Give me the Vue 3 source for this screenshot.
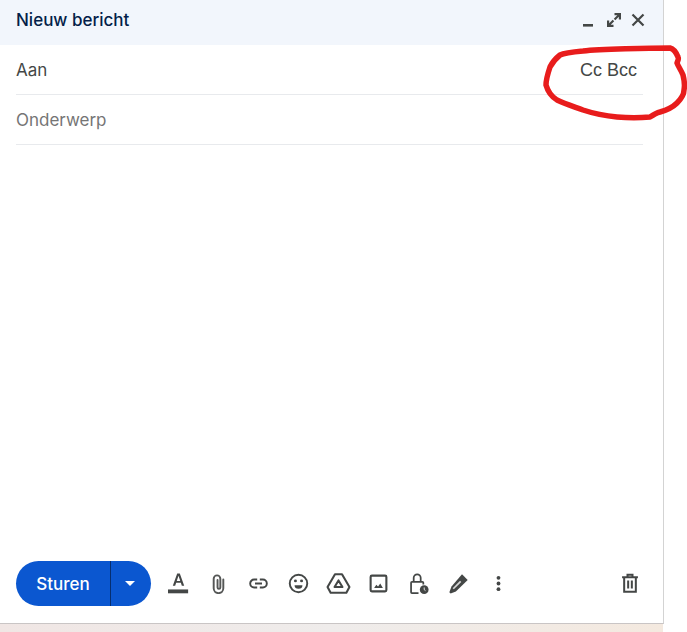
<template>
  <div class="pagina">
    <div class="venster">
      <header class="kop">
        <span class="titel">Nieuw bericht</span>
        <div class="kop-iconen">
          <svg width="16" height="16" viewBox="0 0 16 16"><rect x="1" y="12" width="10" height="2.6" fill="#444746" /></svg>
          <svg width="16" height="16" viewBox="0 0 16 16" fill="#444746">
            <path d="M8.500 1h6.500v6.500h-2.200V4.700L9.300 8.200 7.800 6.700l3.500-3.500H8.500z" />
            <path d="M7.500 15H1V8.500h2.200v2.800l3.500-3.500 1.500 1.500-3.500 3.500h2.800z" />
          </svg>
          <svg width="16" height="16" viewBox="0 0 16 16" fill="none" stroke="#444746" stroke-width="2.200">
            <path d="M2.500 2.500l11 11M13.500 2.500l-11 11" />
          </svg>
        </div>
      </header>

      <div class="veld">
        <span class="aan">Aan</span>
        <span class="cc">Cc Bcc</span>
      </div>
      <div class="veld">
        <span class="onderwerp">Onderwerp</span>
      </div>

      <div class="inhoud"></div>

      <footer class="balk">
        <div class="sturen">
          <span class="sturen-tekst">Sturen</span>
          <span class="sturen-pijl"><i></i></span>
        </div>
        <div class="iconen">
          <!-- opmaak -->
          <svg class="icoon" viewBox="0 0 24 24" fill="#444746">
            <path d="M10.500 0.500h3L18.500 14.500h-2.700l-1.100-3.300H9.300l-1.100 3.300H5.500zM10 9h4l-1.900-5.500h-.2z" />
            <rect x="0" y="18.800" width="23" height="4.400" />
          </svg>
          <!-- bijlage -->
          <svg class="icoon" viewBox="0 0 24 24" fill="none" stroke="#555756" stroke-width="2.200" stroke-linecap="round">
            <path d="M17.500 7.500v10a5.500 5.500 0 0 1-11 0V6.500a3.800 3.800 0 0 1 7.600 0v10a1.600 1.600 0 0 1-3.200 0V8" />
          </svg>
          <!-- link -->
          <svg class="icoon" viewBox="0 0 24 24" fill="none" stroke="#444746" stroke-width="2.200">
            <path d="M10.500 7.500H7a4.500 4.500 0 0 0 0 9h3.500M13.500 7.500H17a4.500 4.500 0 0 1 0 9h-3.500M8 12h8" />
          </svg>
          <!-- emoji -->
          <svg class="icoon" viewBox="0 0 24 24" fill="none" stroke="#444746" stroke-width="2.200">
            <circle cx="12" cy="12" r="10" />
            <circle cx="8.500" cy="9" r="1.700" fill="#444746" stroke="none" />
            <circle cx="15.500" cy="9" r="1.700" fill="#444746" stroke="none" />
            <path d="M7.500 14h9a4.500 4 0 0 1-9 0z" fill="#444746" stroke="none" />
          </svg>
          <!-- drive -->
          <svg class="icoon drive" viewBox="0 0 24 24" fill="none" stroke="#444746" stroke-width="2.400" stroke-linejoin="round">
            <path d="M8 1.500h8L24.500 16l-3.500 6.500H3L-.5 16z" />
            <path d="M12 8.500l4.500 7.500h-9z" />
          </svg>
          <!-- foto -->
          <svg class="icoon" viewBox="0 0 24 24" fill="none" stroke="#444746" stroke-width="2.400">
            <rect x="3" y="3" width="18" height="18" rx="1.500" />
            <path d="M7 17l2.500-3.500 2 2 2.500-3.500 3 5z" fill="#444746" stroke="none" />
          </svg>
          <!-- vertrouwelijk -->
          <svg class="icoon" viewBox="0 0 24 24" fill="none" stroke="#444746" stroke-width="2">
            <path d="M12 23H4.500a1 1 0 0 1-1-1V11a1 1 0 0 1 1-1h12a1 1 0 0 1 1 1v2" />
            <path d="M6.500 10V5.500a4 4 0 0 1 8 0V10" />
            <circle cx="18.500" cy="19" r="5" fill="#444746" stroke="none" />
            <path d="M18.500 16.500V19l1.500 1.200" stroke="#fff" stroke-width="1" />
          </svg>
          <!-- handtekening -->
          <svg class="icoon" viewBox="0 0 24 24" fill="#444746">
            <path d="M16 1.500l6.500 6.500L9 21l-6 2.500L1.500 22 4 15.500z" />
            <path d="M6 18l8.500-8.500" stroke="#d6d6d6" stroke-width="2" />
          </svg>
          <!-- meer -->
          <svg class="icoon" viewBox="0 0 24 24" fill="#444746">
            <circle cx="12" cy="5.500" r="2.200" />
            <circle cx="12" cy="12" r="2.200" />
            <circle cx="12" cy="18.500" r="2.200" />
          </svg>
        </div>
        <svg class="prullenbak" viewBox="0 0 24 24" fill="none" stroke="#444746" stroke-width="2.400">
          <path d="M2.500 5h19M9 5V2h6v3" />
          <path d="M5 5v17.500h14V5" />
          <path d="M9.800 9v9.500M14.200 9v9.500" />
        </svg>
      </footer>
    </div>
    <div class="onderrand"></div>

    <!-- rode markering over de pagina -->
    <svg class="markering" width="687" height="632" viewBox="0 0 687 632" fill="none">
      <path d="M670 48C650 48 600 49 583 51C572 52 564 53 560 55C555 59 552 63 550 67C548 73 546 80 546 85C548 92 552 97 557 100C565 104 575 107 583 110C595 114 606 116 617 117C628 118 640 118 650 117C653 115 656 113 660 112C667 110 673 107 677 103C682 98 684 94 684 90C685 85 684 79 683 75C681 70 678 66 677 63C678 60 679 59 678 57C676 52 674 49 670 48Z" stroke="#e81c1c" stroke-width="5.500" stroke-linejoin="round" />
    </svg>
  </div>
</template>

<script setup>
</script>

<style>
  html, body {
    margin: 0;
    background: #fff;
  }
</style>

<style scoped>
  .pagina {
    position: relative;
    width: 687px;
    height: 632px;
    overflow: hidden;
    background: #fff;
    font-family: Inter, Roboto, sans-serif;
  }

  .venster {
    width: 664px;
    height: 624px;
    box-sizing: border-box;
    border-right: 1px solid #d3d3d3;
    border-bottom: 1px solid #c9c5c5;
    display: flex;
    flex-direction: column;
  }

  .kop {
    height: 45px;
    flex-shrink: 0;
    background: #f2f6fc;
    display: flex;
    align-items: center;
    justify-content: space-between;
    padding: 0 17px 0 16px;
  }

  .titel {
    font-size: 17px;
    font-weight: 500;
    color: #041e49;
    margin-top: -5px;
  }

  .kop-iconen {
    display: flex;
    gap: 8px;
    margin-top: -5px;
  }

  .veld {
    height: 50px;
    box-sizing: border-box;
    margin: 0 20px 0 16px;
    border-bottom: 1px solid #e8eaed;
    display: flex;
    align-items: center;
    justify-content: space-between;
    font-size: 17px;
    flex-shrink: 0;
  }

  .aan {
    color: #444746;
  }

  .onderwerp {
    color: #757575;
  }

  .cc {
    font-family: "Liberation Sans", Arial, sans-serif;
    font-size: 18px;
    color: #444746;
    padding: 1px 6px 0 0;
  }

  .inhoud {
    flex: 1;
  }

  .balk {
    display: flex;
    align-items: center;
    height: 45px;
    padding: 0 23px 17px 16px;
    flex-shrink: 0;
  }

  .sturen {
    width: 135px;
    height: 45px;
    border-radius: 23px;
    background: #0b57d0;
    color: #fff;
    display: flex;
    font-size: 17px;
    font-weight: 500;
    flex-shrink: 0;
  }

  .sturen-tekst {
    width: 94px;
    display: flex;
    align-items: center;
    justify-content: center;
    border-right: 1px solid #062e6f;
  }

  .sturen-pijl {
    flex: 1;
    display: flex;
    align-items: center;
    justify-content: center;
    padding-right: 3px;
  }

  .sturen-pijl i {
    width: 0;
    height: 0;
    border-left: 5px solid transparent;
    border-right: 5px solid transparent;
    border-top: 5px solid #fff;
  }

  .iconen {
    display: flex;
    align-items: center;
    gap: 19px;
    margin-left: 17px;
    flex: 1;
  }

  .icoon {
    width: 21px;
    height: 21px;
    flex-shrink: 0;
  }

  .drive {
    overflow: visible;
  }

  .prullenbak {
    width: 20px;
    height: 20px;
    margin-top: -2px;
  }

  .onderrand {
    height: 8px;
    width: 663px;
    background: linear-gradient(90deg, #f0e6e4, #efeceb 50%, #f4e9df);
  }

  .markering {
    position: absolute;
    top: 0;
    left: 0;
    pointer-events: none;
  }
</style>
